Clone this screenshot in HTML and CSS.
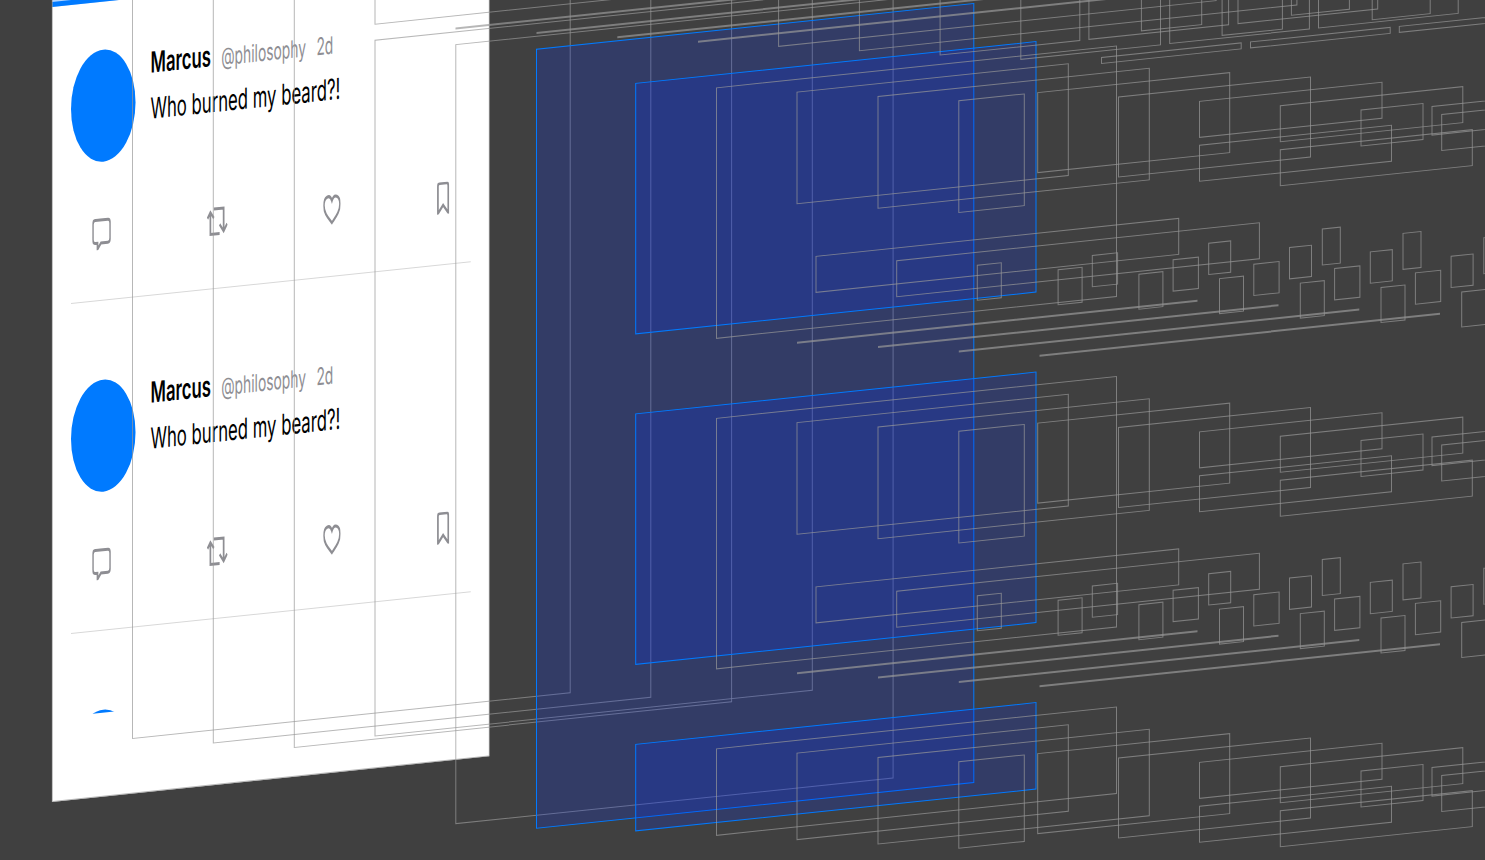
FILE: index.html
```html
<!DOCTYPE html>
<html lang="en">
<head>
    <meta charset="UTF-8">
    <meta name="viewport" content="width=device-width, initial-scale=1.0">
    <title>View hierarchy</title>
    <link rel="stylesheet" href="styles.css">
</head>
<body>

<!-- icons shared by every post -->
<svg class="sprite" aria-hidden="true">
    <symbol id="icon-reply" viewBox="0 0 32 32"><path d="M5 2h22q4 0 4 4v15q0 4-4 4H15l-6 6v-6H5q-4 0-4-4V6q0-4 4-4z"/></symbol>
    <symbol id="icon-repost" viewBox="0 0 36 32"><path d="M1 12l5-6 6 6M6 6v22h16M12 3h17v23M22 19l7 7 6-7"/></symbol>
    <symbol id="icon-like" viewBox="0 0 30 32"><path d="M15 29C9 24 1 19 1 11 1 3 11-1 15 7c4-8 14-4 14 4 0 8-8 13-14 18z"/></symbol>
    <symbol id="icon-save" viewBox="0 0 22 32"><path d="M2 31V4q0-3 3-3h12q3 0 3 3v27l-9-8z"/></symbol>
</svg>

<main class="scene">
    <section class="screen">
        <div class="tabs"></div>
        <div class="feed">
            <article class="post">
                <div class="post-top">
                    <div class="avatar"></div>
                    <div class="post-text">
                        <div class="post-meta"><strong>Marcus</strong><span>@philosophy</span><span>2d</span></div>
                        <p>Who burned my beard?!</p>
                    </div>
                </div>
                <div class="actions">
                    <button type="button" aria-label="Reply"><svg width="32" height="32"><use href="#icon-reply"/></svg></button>
                    <button type="button" aria-label="Repost"><svg width="36" height="32"><use href="#icon-repost"/></svg></button>
                    <button type="button" aria-label="Like"><svg width="30" height="32"><use href="#icon-like"/></svg></button>
                    <button type="button" aria-label="Save"><svg width="22" height="32"><use href="#icon-save"/></svg></button>
                </div>
            </article>
            <article class="post">
                <div class="post-top">
                    <div class="avatar"></div>
                    <div class="post-text">
                        <div class="post-meta"><strong>Marcus</strong><span>@philosophy</span><span>2d</span></div>
                        <p>Who burned my beard?!</p>
                    </div>
                </div>
                <div class="actions">
                    <button type="button" aria-label="Reply"><svg width="32" height="32"><use href="#icon-reply"/></svg></button>
                    <button type="button" aria-label="Repost"><svg width="36" height="32"><use href="#icon-repost"/></svg></button>
                    <button type="button" aria-label="Like"><svg width="30" height="32"><use href="#icon-like"/></svg></button>
                    <button type="button" aria-label="Save"><svg width="22" height="32"><use href="#icon-save"/></svg></button>
                </div>
            </article>
            <article class="post">
                <div class="post-top">
                    <div class="avatar"></div>
                </div>
            </article>
        </div>
    </section>

    <svg class="layers" aria-hidden="true">
        <defs>
            <!-- labels and stacks at the top of one cell -->
            <g id="cell-head">
                <rect x="1037.7" y="201.1" width="192" height="80"/>
                <rect x="1118.5" y="213.9" width="192" height="80"/>
                <rect x="1199.5" y="226.7" width="182.5" height="36"/>
                <rect x="1280.3" y="239.5" width="182.5" height="36"/>
                <rect x="1361" y="252.2" width="62" height="36"/>
                <rect x="1199.5" y="270.6" width="192" height="36"/>
                <rect x="1280.3" y="283.5" width="192" height="36"/>
                <rect x="1432" y="256.1" width="120" height="28.7"/>
                <rect x="1441.7" y="265.2" width="110" height="36"/>
            </g>
            <g id="cell-body">
                <rect x="716.5" y="162.7" width="400" height="250.5"/>
                <rect x="797" y="175.4" width="271.3" height="111.7"/>
                <rect x="878" y="188.3" width="271.3" height="111.7"/>
                <rect x="958.8" y="201" width="65.5" height="111.7"/>
                <rect x="816" y="341.6" width="362.7" height="36"/>
                <rect x="896.7" y="354.4" width="362.7" height="36"/>
                <!-- reply buttons -->
                <rect x="977.3" y="367.4" width="24" height="35"/>
                <rect x="1058.1" y="380.3" width="24" height="35"/>
                <rect x="1138.9" y="393.2" width="24" height="35"/>
                <rect x="1219.5" y="406.1" width="24" height="35"/>
                <rect x="1300.3" y="419" width="24" height="35"/>
                <rect x="1381" y="431.8" width="24" height="35"/>
                <rect x="1461.7" y="444.7" width="24" height="35"/>
                <!-- repost buttons -->
                <rect x="1092.3" y="369.6" width="25.3" height="31.3"/>
                <rect x="1173.1" y="382.4" width="25.3" height="31.3"/>
                <rect x="1253.8" y="395.2" width="25.3" height="31.3"/>
                <rect x="1334.6" y="408" width="25.3" height="31.3"/>
                <rect x="1415.4" y="420.8" width="25.3" height="31.3"/>
                <!-- like buttons -->
                <rect x="1208.7" y="369.5" width="22" height="31.3"/>
                <rect x="1289.5" y="382.3" width="22" height="31.3"/>
                <rect x="1370.3" y="395.1" width="22" height="31.3"/>
                <rect x="1451.1" y="407.9" width="22" height="31.3"/>
                <!-- save buttons -->
                <rect x="1322.3" y="367.2" width="18" height="36"/>
                <rect x="1403" y="380" width="18" height="36"/>
                <rect x="1483.8" y="392.8" width="18" height="36"/>
                <!-- separators -->
                <path class="rule" d="M797 426h400.5M878 438.8h400.5M958.8 451.6h400.5M1039.5 464.3h400.5"/>
            </g>
        </defs>

        <g transform="matrix(1 -0.1045 0 1 0 0)">
            <g class="wire">
                <rect x="52.3" y="-60" width="437" height="867"/>
                <rect x="132.5" y="-60" width="437.7" height="812.3"/>
                <rect x="213.3" y="-60" width="437.5" height="825.3"/>
                <rect x="294.3" y="-60" width="437.3" height="838.2"/>
                <rect x="375" y="-60" width="437.5" height="123.4"/>
                <rect x="375" y="79.5" width="437.3" height="695.7"/>
                <rect x="455.8" y="92.3" width="437.3" height="779"/>
            </g>

            <rect class="picked" x="536.5" y="105.3" width="437.3" height="779"/>
            <rect class="picked" x="635.7" y="149.8" width="400.3" height="250.5"/>
            <rect class="picked" x="635.7" y="480.3" width="400.3" height="250.5"/>
            <rect class="picked" x="635.7" y="810.8" width="400.3" height="86.5"/>

            <g class="wire">
                <path class="rule" d="M455.5 76.1h437M536.5 89h437M617.3 101.8h437M698 114.6h437"/>

                <!-- navigation bar and tabs, cut by the top of the window -->
                <rect x="778.6" y="0" width="437.5" height="127.7"/>
                <rect x="859.4" y="0" width="437.5" height="140.5"/>
                <rect x="940.1" y="0" width="139.7" height="153.3"/>
                <rect x="1020.8" y="0" width="139.7" height="166.1"/>
                <rect x="1088.9" y="0" width="139.7" height="153.2"/>
                <rect x="1169.7" y="0" width="139.7" height="165.8"/>
                <rect x="1238" y="0" width="139.7" height="153"/>
                <rect x="1318.5" y="0" width="139.7" height="165.8"/>
                <rect x="1141.4" y="0" width="60.3" height="150.2"/>
                <rect x="1222.1" y="0" width="60.3" height="163.1"/>
                <rect x="1291.4" y="0" width="58" height="150.2"/>
                <rect x="1372.2" y="0" width="58" height="163.1"/>
                <rect x="1101.5" y="172.6" width="139.7" height="6"/>
                <rect x="1250.5" y="172.6" width="139.7" height="6"/>
                <rect x="1399.3" y="172.6" width="139.7" height="6"/>

                <use href="#cell-head"/>
                <use href="#cell-body"/>
                <use href="#cell-head" y="330.5"/>
                <use href="#cell-body" y="330.5"/>

                <!-- last cell, cut by the end of the list -->
                <use href="#cell-head" y="661"/>
                <rect x="716.5" y="823.7" width="400" height="86.5"/>
                <rect x="797" y="836.4" width="271.3" height="86.5"/>
                <rect x="878" y="849.3" width="271.3" height="86.5"/>
                <rect x="958.8" y="862" width="65.5" height="86.5"/>
            </g>
        </g>
    </svg>
</main>

</body>
</html>
```

FILE: styles.css
```css
body {
    margin: 0;
    background-color: #404040;
    color: #000;
    font-family: Inter, "Liberation Sans", sans-serif;
}

.sprite {
    position: absolute;
    width: 0;
    height: 0;
}

/* Free canvas that holds the exploded layers */
.scene {
    position: relative;
    height: 100vh;
    overflow: hidden;
}

/* Front layer: the rendered screen, seen from the side */
.screen {
    position: absolute;
    top: -50px;
    left: 52px;
    width: 759px;
    background-color: #fff;
    transform-origin: 0 0;
    transform: matrix(0.576, -0.0602, 0, 1, 0, 0);
}

.tabs {
    height: 52px;
    background-color: #b0d4ff;
    border-bottom: 5px solid #007aff;
}

.feed {
    height: 711px;
    margin-bottom: 84px;
    overflow: hidden;
}

.post {
    box-sizing: border-box;
    height: 330px;
    padding: 48px 32px 0 33px;
}

.post-top {
    display: flex;
    gap: 26px;
}

.avatar {
    width: 112px;
    height: 112px;
    border-radius: 50%;
    background-color: #007aff;
}

.post-meta {
    display: flex;
    align-items: baseline;
    gap: 18px;
    font-size: 24px;
    line-height: 36px;
    color: #8e8e93;
}

.post-meta strong {
    font-size: 29px;
    font-weight: 600;
    color: #000;
}

.post-text p {
    margin: 8px 0 0;
    font-size: 29px;
    line-height: 36px;
}

.actions {
    display: flex;
    justify-content: space-between;
    margin-top: 56px;
    padding: 0 37px 50px;
    border-bottom: 1px solid #d8d8d8;
}

.actions button {
    padding: 0;
    border: 0;
    background: none;
}

.actions svg {
    display: block;
    fill: none;
    stroke: #8e8e93;
    stroke-width: 3;
}

/* Wireframes */
.layers {
    position: absolute;
    inset: 0;
    width: 100%;
    height: 100%;
    pointer-events: none;
}

.wire {
    fill: none;
    stroke: rgba(153, 153, 153, 0.7);
    stroke-width: 1;
}

.rule {
    stroke-width: 2;
}

.picked {
    fill: rgba(0, 46, 255, 0.2);
    stroke: #007aff;
    stroke-width: 1;
}
```
